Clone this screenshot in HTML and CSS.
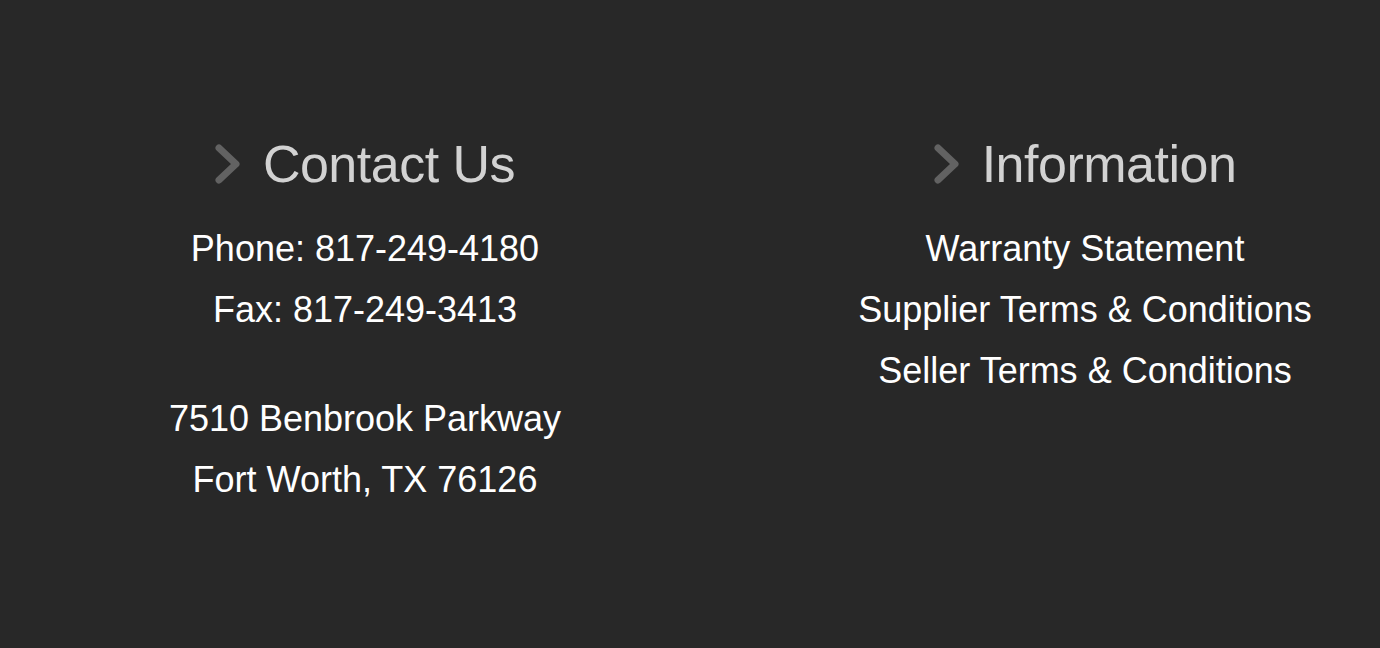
FILE: index.html
```html
<!DOCTYPE html>
<html lang="en">
<head>
  <meta charset="UTF-8" />
  <meta name="viewport" content="width=device-width, initial-scale=1" />
  <title>Footer - Contact Us &amp; Information</title>
  <link rel="stylesheet" href="styles.css">
</head>
<body>
  <footer class="site-footer">
    <div class="footer-col">
      <h3 class="footer-title">
        <svg class="chevron" width="26" height="40" viewBox="0 0 26 40" aria-hidden="true">
          <polyline points="4,4 21,20 4,36" />
        </svg>
        <span>Contact Us</span>
      </h3>
      <p>Phone: 817-249-4180<br>Fax: 817-249-3413</p>
      <p class="address">7510 Benbrook Parkway<br>Fort Worth, TX 76126</p>
    </div>

    <div class="footer-col">
      <h3 class="footer-title">
        <svg class="chevron" width="26" height="40" viewBox="0 0 26 40" aria-hidden="true">
          <polyline points="4,4 21,20 4,36" />
        </svg>
        <span>Information</span>
      </h3>
      <ul class="footer-links">
        <li><a href="#">Warranty Statement</a></li>
        <li><a href="#">Supplier Terms &amp; Conditions</a></li>
        <li><a href="#">Seller Terms &amp; Conditions</a></li>
      </ul>
    </div>
  </footer>
</body>
</html>
```

FILE: styles.css
```css
body {
  margin: 0;
  padding: 0;
  background-color: #282828;
  font-family: "Liberation Sans", Arial, sans-serif;
}
.site-footer {
  display: grid;
  grid-template-columns: 560px 560px;
  column-gap: 160px;
  padding: 134px 0 0 85px;
  min-height: 514px;
}
.footer-col {
  text-align: center;
  color: #fff;
  font-size: 36px;
  line-height: 61px;
}
.footer-title {
  display: flex;
  justify-content: center;
  align-items: center;
  gap: 22px;
  margin: 0 0 24px;
  font-size: 52px;
  font-weight: normal;
  line-height: 60px;
  letter-spacing: -0.5px;
  color: #d2d2d2;
}
.chevron polyline {
  fill: none;
  stroke: #626262;
  stroke-width: 7;
  stroke-linecap: round;
  stroke-linejoin: round;
}
.footer-col p {
  margin: 0;
}
.footer-col p.address {
  margin-top: 48px;
}
.footer-links {
  list-style: none;
  margin: 0;
  padding: 0;
}
.footer-links a {
  color: #fff;
  text-decoration: none;
}
.footer-links a:hover {
  text-decoration: underline;
}
```
